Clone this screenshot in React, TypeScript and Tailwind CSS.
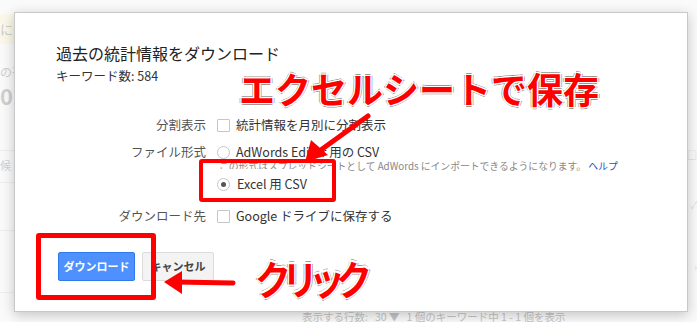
import React from "react";

const JP = "font-['Noto_Sans_CJK_JP','Noto_Sans',sans-serif]";

function Checkbox() {
  return <span className="inline-block w-[13px] h-[13px] border border-[#c6c6c6] rounded-[1px] bg-white shrink-0" />;
}

function Radio({ checked }: { checked?: boolean }) {
  return (
    <span className="inline-flex w-[13px] h-[13px] rounded-full border border-[#c6c6c6] bg-white items-center justify-center shrink-0">
      {checked && <span className="w-[5px] h-[5px] rounded-full bg-[#555]" />}
    </span>
  );
}

const outline =
  "[text-shadow:1px_0_0_#fff,-1px_0_0_#fff,0_1px_0_#fff,0_-1px_0_#fff,1px_1px_0_#fff,-1px_-1px_0_#fff,1px_-1px_0_#fff,-1px_1px_0_#fff,2px_0_0_#999,-2px_0_0_#999,0_2px_0_#999,0_-2px_0_#999]";

export default function App() {
  return (
    <div className={`relative w-[697px] h-[322px] overflow-hidden bg-white ${JP}`}>
      {/* faded page behind the dialog */}
      <div className="absolute inset-0 bg-[#fafafa]">
        <div className="absolute left-0 top-[14px] w-[20px] h-[30px] bg-[#fbf8e9]" />
        <div className="absolute left-0 top-[22px] text-[13px] text-[#ccc] leading-none">に</div>
        <div className="absolute left-0 top-[66px] text-[12px] text-[#d0d0d0] leading-none">の平</div>
        <div className="absolute left-0 top-[84px] text-[22px] font-bold text-[#cfcfcf] leading-none">0</div>
        <div className="absolute left-0 top-[150px] w-[14px] h-px bg-[#eee]" />
        <div className="absolute left-0 top-[160px] text-[11px] text-[#d2d2d2] leading-none">候</div>
        <div className="absolute left-0 top-[182px] w-[14px] h-px bg-[#eee]" />
        <div className="absolute left-0 top-[230px] w-[14px] h-px bg-[#eee]" />
        <div className="absolute left-0 top-[292px] w-[14px] h-px bg-[#eee]" />
        <div className="absolute right-0 top-[150px] text-[10px] text-[#d8d8d8] leading-none">□</div>
        <div className="absolute right-0 top-[200px] text-[10px] text-[#ddd] leading-none">✓</div>
        <div className="absolute right-0 top-[262px] text-[10px] text-[#ddd] leading-none">›</div>
        <div className="absolute left-[302px] top-[312px] text-[10.5px] leading-[10px] text-[#c4c4c4] whitespace-nowrap">
          表示する行数:&nbsp;&nbsp; 30 ▼ &nbsp;&nbsp;1 個のキーワード中 1 - 1 個を表示
        </div>
      </div>

      {/* dialog */}
      <div className="relative pt-[12px] pl-[14px]">
        <div className="w-[674px] h-[300px] bg-white border border-[#c8c8c8] shadow-[0_3px_12px_rgba(0,0,0,0.22)] pt-[30px] pl-[41px]">
          <div className="text-[16px] leading-[20px] text-[#222]">過去の統計情報をダウンロード</div>
          <div className="mt-[4px] text-[12.5px] leading-[18px] text-[#333]">キーワード数: 584</div>

          <div className="mt-[30px] grid grid-cols-[150px_1fr] gap-x-[11px] text-[12.5px] text-[#333]">
            <div className="h-[20px] flex items-center justify-end text-[#555]">分割表示</div>
            <div className="h-[20px] flex items-center gap-[6px]">
              <Checkbox />
              <span>統計情報を月別に分割表示</span>
            </div>

            <div className="mt-[7px] h-[20px] flex items-center justify-end text-[#555]">ファイル形式</div>
            <div className="mt-[7px] flex flex-col">
              <div className="h-[20px] flex items-center gap-[6px]">
                <Radio />
                <span>AdWords Editor 用の CSV</span>
              </div>
              <div className="-mt-[2px] pl-[2px] text-[9.8px] leading-[12px] text-[#888] whitespace-nowrap">
                この形式はスプレッドシートとして AdWords にインポートできるようになります。 <span className="text-[#15c]">ヘルプ</span>
              </div>
              <div className="mt-[2px] h-[20px] flex items-center gap-[7px]">
                <Radio checked />
                <span>Excel 用 CSV</span>
              </div>
            </div>

            <div className="mt-[12px] h-[20px] flex items-center justify-end text-[#555]">ダウンロード先</div>
            <div className="mt-[12px] h-[20px] flex items-center gap-[6px]">
              <Checkbox />
              <span>Google ドライブに保存する</span>
            </div>
          </div>

          <div className="mt-[26px] flex gap-[7px] pl-[2px]">
            <button className="h-[29px] w-[77px] rounded-[2px] bg-[#4d90fe] border border-[#3079ed] text-white text-[11px] font-bold">
              ダウンロード
            </button>
            <button className="h-[29px] w-[72px] rounded-[2px] bg-[#f3f3f3] border border-[#dcdcdc] text-[#444] text-[11px] font-bold">
              キャンセル
            </button>
          </div>
        </div>
      </div>

      {/* annotations */}
      <div className="absolute left-[199px] top-[159px] w-[137px] h-[43px] rounded-[3px] border-[4px] border-[#f00] pointer-events-none">
        <div className="absolute left-[4px] right-[0px] top-[6px] h-[6px] bg-white" />
      </div>
      <div className="absolute left-[36px] top-[233px] w-[120px] h-[67px] rounded-[3px] border-[5px] border-[#f00] pointer-events-none" />

      <svg className="absolute inset-0 pointer-events-none" width="697" height="322">
        <line x1="368" y1="116" x2="318" y2="152" stroke="#f00" strokeWidth="5" strokeLinecap="round" />
        <polygon points="305,162 311,140 328,155" fill="#f00" />
        <line x1="233" y1="283" x2="176" y2="282" stroke="#f00" strokeWidth="5" strokeLinecap="round" />
        <polygon points="164,282 182,271 182,294" fill="#f00" />
      </svg>

      <div className={`absolute left-[239px] top-[67px] text-[36px] leading-[42px] font-bold text-[#f00] whitespace-nowrap ${outline}`}>
        エクセルシートで保存
      </div>
      <div className={`absolute left-[255px] top-[252px] text-[36px] leading-[44px] font-bold text-[#f00] whitespace-nowrap tracking-[-9px] origin-top scale-y-[1.12] ${outline}`}>
        クリック
      </div>
    </div>
  );
}
